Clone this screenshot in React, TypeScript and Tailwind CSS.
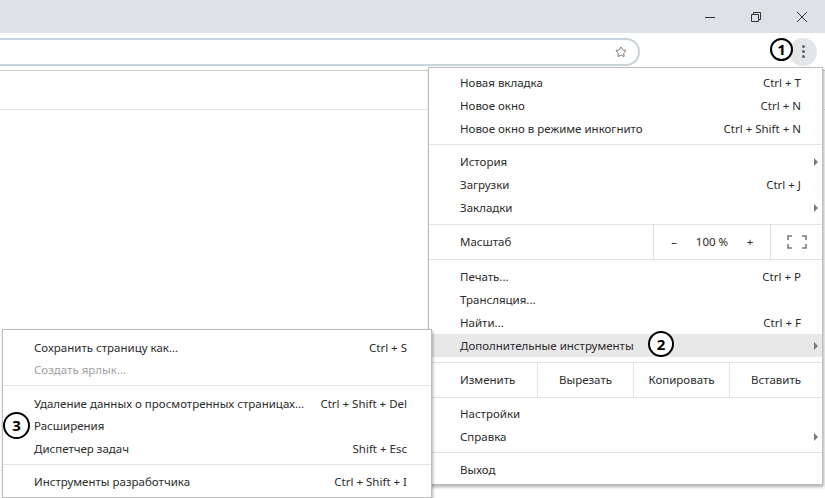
import React from 'react';
import { Star } from 'lucide-react';

const Arrow = () => (
  <span className="w-0 h-0 border-y-[4px] border-y-transparent border-l-[4px] border-l-[#7a7a7a]" />
);

const Row: React.FC<{ label: string; shortcut?: string; arrow?: boolean; active?: boolean }> = ({
  label,
  shortcut,
  arrow,
  active,
}) => (
  <div className={`h-[23px] flex items-center pl-[31px] ${active ? 'bg-[#e8e8e8]' : ''}`}>
    <span className="flex-1">{label}</span>
    {shortcut && <span>{shortcut}</span>}
    <span className="w-[21px] flex justify-end pr-[4px]">{arrow && <Arrow />}</span>
  </div>
);

const SubRow: React.FC<{ label: string; shortcut?: string; muted?: boolean }> = ({ label, shortcut, muted }) => (
  <div className={`h-[22.5px] flex items-center pl-[31px] pr-[24px] ${muted ? 'text-[#a0a0a0]' : ''}`}>
    <span className="flex-1">{label}</span>
    {shortcut && <span>{shortcut}</span>}
  </div>
);

const Sep = ({ cls }: { cls: string }) => <div className={`h-px bg-[#e3e3e3] ${cls}`} />;

const Badge: React.FC<{ n: string; cls: string }> = ({ n, cls }) => (
  <div
    className={`absolute z-20 rounded-full border-2 border-black bg-white flex items-center justify-center font-bold text-[15px] text-black leading-none ${cls}`}
  >
    {n}
  </div>
);

export default function App() {
  return (
    <div className="relative w-[825px] h-[498px] overflow-hidden bg-white font-['Noto_Sans',sans-serif] text-[11.5px] text-[#2b2b2b]">
      {/* title bar */}
      <div className="h-[33px] bg-[#dee1e6] flex justify-end">
        <div className="w-[46px] flex items-center justify-center">
          <svg width="12" height="12" viewBox="0 0 12 12">
            <path d="M1 6.5h10" stroke="#333" strokeWidth="1" />
          </svg>
        </div>
        <div className="w-[46px] flex items-center justify-center">
          <svg width="12" height="12" viewBox="0 0 12 12">
            <path d="M1.5 3.5h7v7h-7z M3.5 3.5v-2h7v7h-2" fill="none" stroke="#333" strokeWidth="1" />
          </svg>
        </div>
        <div className="w-[46px] flex items-center justify-center">
          <svg width="12" height="12" viewBox="0 0 12 12">
            <path d="M1 1l10 10M11 1L1 11" stroke="#333" strokeWidth="1" />
          </svg>
        </div>
      </div>

      {/* toolbar */}
      <div className="h-[38px] flex items-center border-b border-[#c7cdd1]">
        <div className="ml-[-20px] w-[660px] h-[28px] rounded-r-full border-2 border-l-0 border-[#c9d3da] bg-white flex items-center justify-end pr-[11px]">
          <Star size={12} strokeWidth={1.6} color="#555" />
        </div>
        <div className="ml-auto mr-[8px] w-[28px] h-[28px] rounded-full bg-[#e4e5e7] flex flex-col items-center justify-center gap-[2px]">
          <span className="w-[3px] h-[3px] rounded-full bg-[#5f6368]" />
          <span className="w-[3px] h-[3px] rounded-full bg-[#5f6368]" />
          <span className="w-[3px] h-[3px] rounded-full bg-[#5f6368]" />
        </div>
      </div>

      {/* page */}
      <div className="h-[39px] border-b border-[#e3e3e3]" />

      {/* main menu */}
      <div className="absolute left-[428px] top-[67px] w-[395px] bg-white border border-[#bdbdbd] shadow-[1px_2px_3px_rgba(0,0,0,0.3)] pt-[3px] pb-[3px] z-10">
        <Row label="Новая вкладка" shortcut="Ctrl + T" />
        <Row label="Новое окно" shortcut="Ctrl + N" />
        <Row label="Новое окно в режиме инкогнито" shortcut="Ctrl + Shift + N" />
        <Sep cls="mt-[4px] mb-[5px]" />
        <Row label="История" arrow />
        <Row label="Загрузки" shortcut="Ctrl + J" />
        <Row label="Закладки" arrow />
        <Sep cls="mt-[5px]" />
        <div className="h-[34px] flex items-center">
          <span className="flex-1 pl-[31px]">Масштаб</span>
          <div className="h-full w-[117px] border-l border-[#e3e3e3] flex items-center pl-px">
            <span className="w-[38px] text-center">–</span>
            <span className="w-[38px] text-center">100 %</span>
            <span className="w-[38px] text-center">+</span>
          </div>
          <div className="h-full w-[52px] border-l border-[#e3e3e3] flex items-center justify-center">
            <svg width="20" height="14" viewBox="0 0 20 14">
              <path
                d="M1 5V1h4M15 1h4v4M19 9v4h-4M5 13H1V9"
                fill="none"
                stroke="#7a7a7a"
                strokeWidth="1.6"
              />
            </svg>
          </div>
        </div>
        <Sep cls="mb-[5px]" />
        <Row label="Печать..." shortcut="Ctrl + P" />
        <Row label="Трансляция..." />
        <Row label="Найти..." shortcut="Ctrl + F" />
        <Row label="Дополнительные инструменты" arrow active />
        <Sep cls="mt-[5px]" />
        <div className="h-[34px] flex items-center">
          <span className="flex-1 pl-[31px]">Изменить</span>
          <span className="h-full w-[96px] border-l border-[#e3e3e3] flex items-center justify-center">Вырезать</span>
          <span className="h-full w-[96px] border-l border-[#e3e3e3] flex items-center justify-center">Копировать</span>
          <span className="h-full w-[93px] border-l border-[#e3e3e3] flex items-center justify-center">Вставить</span>
        </div>
        <Sep cls="mb-[4px]" />
        <Row label="Настройки" />
        <Row label="Справка" arrow />
        <Sep cls="mt-[4px] mb-[5px]" />
        <Row label="Выход" />
      </div>

      {/* submenu */}
      <div className="absolute left-[2px] top-[329px] w-[430px] bg-white border border-[#bdbdbd] shadow-[1px_2px_3px_rgba(0,0,0,0.3)] pt-[6px] pb-[4px] z-10">
        <SubRow label="Сохранить страницу как..." shortcut="Ctrl + S" />
        <SubRow label="Создать ярлык..." muted />
        <Sep cls="mt-[4px] mb-[6px]" />
        <SubRow label="Удаление данных о просмотренных страницах..." shortcut="Ctrl + Shift + Del" />
        <SubRow label="Расширения" />
        <SubRow label="Диспетчер задач" shortcut="Shift + Esc" />
        <Sep cls="mt-[4px] mb-[6px]" />
        <SubRow label="Инструменты разработчика" shortcut="Ctrl + Shift + I" />
      </div>

      <Badge n="1" cls="left-[770px] top-[38px] w-[23px] h-[23px]" />
      <Badge n="2" cls="left-[648px] top-[331px] w-[26px] h-[26px]" />
      <Badge n="3" cls="left-[3px] top-[412px] w-[27px] h-[27px]" />
    </div>
  );
}
